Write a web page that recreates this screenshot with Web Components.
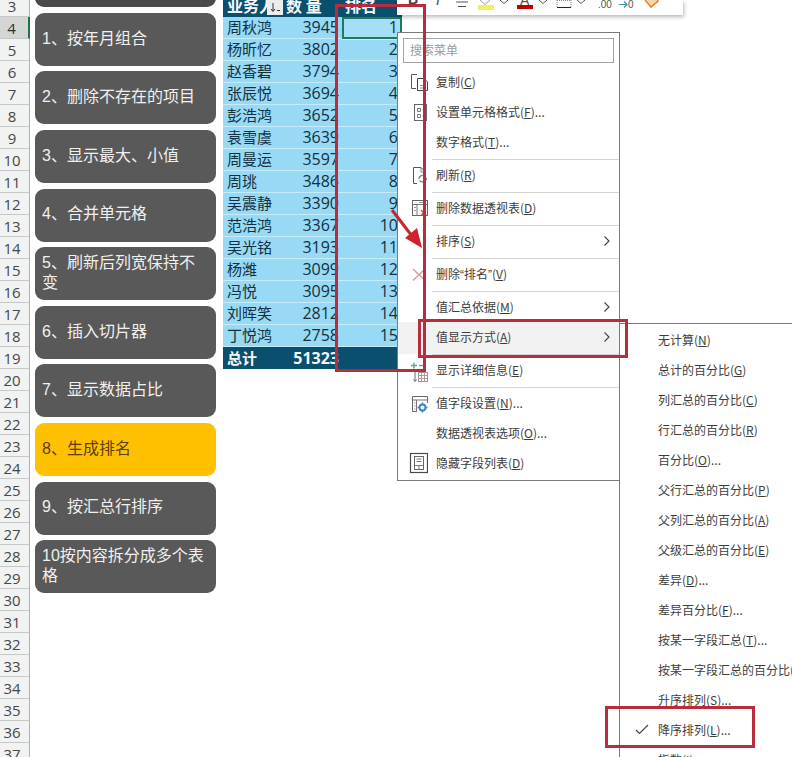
<!DOCTYPE html>
<html lang="zh">
<head>
<meta charset="utf-8">
<title>数据透视表</title>
<style>
  html, body { margin: 0; padding: 0; background: #fff; overflow: hidden; }
  body { font-family: "Noto Sans CJK SC", "Noto Sans", sans-serif; }
</style>
</head>
<body>
<x-sheet>
  <x-row-headers from="3" to="37" active="4"></x-row-headers>
  <x-slicer>
    <x-slicer-item stub></x-slicer-item>
    <x-slicer-item>1、按年月组合</x-slicer-item>
    <x-slicer-item>2、删除不存在的项目</x-slicer-item>
    <x-slicer-item>3、显示最大、小值</x-slicer-item>
    <x-slicer-item>4、合并单元格</x-slicer-item>
    <x-slicer-item>5、刷新后列宽保持不变</x-slicer-item>
    <x-slicer-item>6、插入切片器</x-slicer-item>
    <x-slicer-item>7、显示数据占比</x-slicer-item>
    <x-slicer-item selected>8、生成排名</x-slicer-item>
    <x-slicer-item>9、按汇总行排序</x-slicer-item>
    <x-slicer-item>10按内容拆分成多个表格</x-slicer-item>
  </x-slicer>
  <x-pivot></x-pivot>

  <x-toolbar></x-toolbar>

  <x-menu style="left:397px;top:32px;width:221px;">
    <x-search>搜索菜单</x-search>
    <x-menu-item>
      <svg slot="icon" viewBox="0 0 30 30" width="30" height="30" fill="none" stroke="#555"><path d="M19 7.5H13.5V21.5H18"/><path d="M19.5 11.5H26L29.5 15V23.5H19.5Z" stroke="#444"/><path d="M22 18.5H27M22 21H27" stroke="#888"/></svg>
      复制(<u>C</u>)
    </x-menu-item>
    <x-menu-item>
      <svg slot="icon" viewBox="0 0 30 30" width="30" height="30" fill="none" stroke="#666"><rect x="16.5" y="7.5" width="12" height="16"/><path d="M19.5 11.5h3v3h-3zM19.5 17.5h3v3h-3z" stroke="#777"/><path d="M24.5 13h2M24.5 19h2" stroke="#999"/></svg>
      设置单元格格式(<u>F</u>)...
    </x-menu-item>
    <x-menu-item>数字格式(<u>T</u>)...</x-menu-item>
    <x-menu-sep></x-menu-sep>
    <x-menu-item>
      <svg slot="icon" viewBox="0 0 30 30" width="30" height="30" fill="none" stroke="#555"><path d="M19 23.5H15.5V7.5H23L27.5 12V15"/><path d="M23 7.5V12H27.5" stroke="#888"/><path d="M21 19a4 4 0 0 1 7-2.5M28.5 18a4 4 0 0 1-7 2.5" stroke="#5d9b73" stroke-width="1.3"/></svg>
      刷新(<u>R</u>)
    </x-menu-item>
    <x-menu-sep></x-menu-sep>
    <x-menu-item>
      <svg slot="icon" viewBox="0 0 30 30" width="30" height="30" fill="none" stroke="#666"><rect x="14.5" y="7.5" width="15" height="15"/><path d="M14.5 11.5H29.5M19 11.5V22.5" stroke="#777"/><path d="M16 14.5h2M16 17.5h2M21 9.5h6" stroke="#999"/><path d="M23 17l5 5.5M28 17l-5 5.5" stroke="#cf4a4a" stroke-width="1.2"/></svg>
      删除数据透视表(<u>D</u>)
    </x-menu-item>
    <x-menu-sep></x-menu-sep>
    <x-menu-item sub>排序(<u>S</u>)</x-menu-item>
    <x-menu-sep></x-menu-sep>
    <x-menu-item>
      <svg slot="icon" viewBox="0 0 30 30" width="30" height="30" fill="none" stroke="#dc9a9a" stroke-width="1.4"><path d="M15 10L27 21.5M27 10L15 21.5"/></svg>
      删除<span style="font-family:'Liberation Sans',sans-serif">“</span>排名<span style="font-family:'Liberation Sans',sans-serif">”</span>(<u>V</u>)
    </x-menu-item>
    <x-menu-sep></x-menu-sep>
    <x-menu-item sub>值汇总依据(<u>M</u>)</x-menu-item>
    <x-menu-item sub hover>值显示方式(<u>A</u>)</x-menu-item>
    <x-menu-sep></x-menu-sep>
    <x-menu-item>
      <svg slot="icon" viewBox="0 0 30 30" width="30" height="30" fill="none" stroke="#666"><path d="M13 10.5H19M16 7.5V13.5" stroke="#6fa384" stroke-width="1.5"/><path d="M21 10.5H25" stroke="#888" stroke-width="1.3"/><path d="M17 17V26M15.5 24.5L17 26.5L18.5 24.5" stroke="#666"/><rect x="20.5" y="17.5" width="9" height="9" stroke="#999"/><path d="M20.5 20.5H29.5M20.5 23.5H29.5M23.5 17.5V26.5M26.5 17.5V26.5" stroke="#b09a9a"/></svg>
      显示详细信息(<u>E</u>)
    </x-menu-item>
    <x-menu-sep></x-menu-sep>
    <x-menu-item>
      <svg slot="icon" viewBox="0 0 30 30" width="30" height="30" fill="none" stroke="#666"><path d="M19 23.5H14.5V8.5H29.5V15"/><path d="M14.5 12H29.5M18.5 12V23" stroke="#777"/><path d="M16 15h1.5M16 18h1.5M16 21h1.5" stroke="#999"/><circle cx="24.5" cy="19.5" r="3" stroke="#3c86c6" stroke-width="2"/><path d="M24.5 14.5v1.5M24.5 23v1.5M19.5 19.5h1.5M28 19.5h1.5" stroke="#3c86c6" stroke-width="1.6"/></svg>
      值字段设置(<u>N</u>)...
    </x-menu-item>
    <x-menu-item>数据透视表选项(<u>O</u>)...</x-menu-item>
    <x-menu-item>
      <svg slot="icon" viewBox="0 0 30 30" width="30" height="30" fill="none" stroke="#555"><rect x="12.5" y="5.5" width="17" height="19" stroke="#4a4a4a" stroke-width="1.2"/><rect x="16.5" y="8.5" width="9" height="13" stroke="#666"/><path d="M16.5 17.5H25.5M21 17.5V21.5M18.5 11h5M18.5 13.5h5" stroke="#777"/></svg>
      隐藏字段列表(<u>D</u>)
    </x-menu-item>
  </x-menu>

  <x-menu flush style="left:619px;top:323px;width:260px;">
    <x-menu-item wide>无计算(<u>N</u>)</x-menu-item>
    <x-menu-item wide>总计的百分比(<u>G</u>)</x-menu-item>
    <x-menu-item wide>列汇总的百分比(<u>C</u>)</x-menu-item>
    <x-menu-item wide>行汇总的百分比(<u>R</u>)</x-menu-item>
    <x-menu-item wide>百分比(<u>O</u>)...</x-menu-item>
    <x-menu-item wide>父行汇总的百分比(<u>P</u>)</x-menu-item>
    <x-menu-item wide>父列汇总的百分比(<u>A</u>)</x-menu-item>
    <x-menu-item wide>父级汇总的百分比(<u>E</u>)</x-menu-item>
    <x-menu-item wide>差异(<u>D</u>)...</x-menu-item>
    <x-menu-item wide>差异百分比(<u>F</u>)...</x-menu-item>
    <x-menu-item wide>按某一字段汇总(<u>T</u>)...</x-menu-item>
    <x-menu-item wide>按某一字段汇总的百分比(<u>U</u>)...</x-menu-item>
    <x-menu-item wide>升序排列(<u>S</u>)...</x-menu-item>
    <x-menu-item wide check>降序排列(<u>L</u>)...</x-menu-item>
    <x-menu-item wide>指数(<u>I</u>)</x-menu-item>
  </x-menu>

  <x-callout style="left:335px;top:4px;width:85px;height:362px;"></x-callout>
  <x-callout style="left:418px;top:319px;width:204px;height:33px;"></x-callout>
  <x-callout style="left:605px;top:706px;width:144px;height:36px;"></x-callout>
  <x-arrow></x-arrow>
</x-sheet>

<script>
function make(tag, css, html, init) {
  customElements.define(tag, class extends HTMLElement {
    constructor() {
      super();
      this.attachShadow({ mode: 'open' }).innerHTML = '<style>' + css + '</style>' + html;
    }
    connectedCallback() { if (init) init.call(this, this.shadowRoot); }
  });
}

make('x-sheet', `
  :host { display: flex; position: relative; width: 792px; height: 757px; overflow: hidden;
          background: #fff; box-sizing: border-box; }
  .flow { display: flex; align-items: flex-start; margin-top: -5px; }
`, `<div class="flow"><slot></slot></div>`);

make('x-row-headers', `
  :host { display: block; width: 30px; flex: none; }
  .r { box-sizing: border-box; height: 22px; width: 30px; background: #f1f2f2;
       border-right: 1px solid #aeb0b0; border-bottom: 1px solid #c6c8c8;
       display: flex; align-items: center; justify-content: center; padding-right: 5px;
       font: 15px/22px "Open Sans", sans-serif; color: #474747; }
  .a { background: #d4d6d5; border-right: 2px solid #217346; color: #333; }
`, `<div id="c"></div>`, function (s) {
  const c = s.getElementById('c');
  const a = +this.getAttribute('active');
  for (let i = +this.getAttribute('from'); i <= +this.getAttribute('to'); i++) {
    const d = document.createElement('div');
    d.className = 'r' + (i === a ? ' a' : '');
    d.textContent = i;
    c.appendChild(d);
  }
});

make('x-slicer', `
  :host { display: flex; flex-direction: column; gap: 5.6px; width: 181px; margin: 0 7px 0 5px; flex: none; }
`, `<slot></slot>`);

make('x-slicer-item', `
  :host { display: flex; align-items: center; box-sizing: border-box; height: 53px; padding: 0 7px 2px;
          background: #595959; color: #f0f0f0; border-radius: 9px;
          font: 16px/19.3px "Liberation Sans", "Noto Sans CJK SC", sans-serif; }
  :host([selected]) { background: #ffc000; color: #5b3f00; }
  :host([stub]) { height: 12.2px; padding: 0; border-radius: 0 0 9px 9px; background: #4a4a4a; }
`, `<div><slot></slot></div>`);

const ROWS = [['周秋鸿',3945],['杨昕忆',3802],['赵香碧',3794],['张辰悦',3694],['彭浩鸿',3652],['袁雪虞',3639],['周曼运',3597],['周珧',3486],['吴震静',3390],['范浩鸿',3367],['吴光铭',3193],['杨潍',3099],['冯悦',3095],['刘晖笑',2812],['丁悦鸿',2758]];

make('x-pivot', `
  :host { display: block; width: 179px; flex: none; position: relative; }
  .g { display: grid; grid-template-columns: 60px 59px 60px; grid-auto-rows: 22px; }
  .c { box-sizing: border-box; height: 22px; background: #98daf5; border-bottom: 1px solid #c4ecfb;
       color: #12303f; font: 15px/19px "Noto Sans CJK SC", sans-serif; padding: 0 4px; white-space: nowrap; overflow: hidden; }
  .n { font: 16px/21px "Open Sans", sans-serif; text-align: right; padding: 0 3px 0 0; }
  .rk { padding-right: 4px; }
  .h { background: #0a4f6e; border: 0; color: #f4f8fa; font: 700 16px/20px "Noto Sans CJK SC", sans-serif; padding-left: 3px; }
  .h.first { padding-left: 4px; position: relative; overflow: visible; }
  .t { background: #0a4f6e; border: 0; color: #f4f8fa; font: 700 15px/21px "Noto Sans CJK SC", sans-serif; }
  .t.n { font: 700 16px/22px "Open Sans", sans-serif; }
  .sel { box-shadow: inset 0 0 0 2px #217a5e; height: 23px; background: #a4dff7; position: relative; }
  .btn { position: absolute; left: 44px; top: 5px; width: 16px; height: 15px; background: #ececec;
         display: flex; align-items: center; justify-content: center; }
`, `<div class="g" id="g"></div>`, function (s) {
  const g = s.getElementById('g');
  let h = `<div class="c h first">业务人<span class="btn"><svg width="12" height="11" viewBox="0 0 12 11" fill="none" stroke="#333"><path d="M4 1V9M2 7L4 9.5L6 7"/><path d="M8 8.5H11" /></svg></span></div>
           <div class="c h">数 量</div><div class="c h">排名</div>`;
  ROWS.forEach((r, i) => {
    h += `<div class="c">${r[0]}</div><div class="c n">${r[1]}</div><div class="c n rk${i === 0 ? ' sel' : ''}">${i + 1}</div>`;
  });
  h += `<div class="c t">总计</div><div class="c t n">51323</div><div class="c t"></div>`;
  g.innerHTML = h;
});

make('x-toolbar', `
  :host { display: block; position: absolute; left: 397px; top: 0; width: 286px; height: 15px;
          background: #fff; box-shadow: 1px 2px 4px rgba(0,0,0,.28); }
  svg { display: block; }
  text { font-family: "Liberation Sans", sans-serif; }
`, `<svg width="286" height="15" viewBox="397 0 286 15" fill="none">
  <text x="408" y="4" font-size="14" font-weight="700" fill="#444">B</text>
  <text x="436" y="5" font-size="14" font-style="italic" fill="#444" font-family="Liberation Serif">I</text>
  <path d="M456 2H468M458 6.500H466" stroke="#555"/>
  <path d="M480 0L485 4.500L490 0" stroke="#999"/>
  <rect x="478" y="5" width="16" height="5" fill="#f4f15a"/>
  <path d="M500 0L504 3.500L508 0M539 0L543 3.500L547 0M577 0L581 3.500L585 0" stroke="#555"/>
  <text x="520" y="5" font-size="14" fill="#555">A</text>
  <rect x="517" y="5" width="16" height="4" fill="#c00000"/>
  <path d="M557 0.500H571M557 0V7M571 0V7" stroke="#888" stroke-dasharray="1 1"/>
  <path d="M557 7.500H571" stroke="#222"/>
  <text x="598" y="8" font-size="10" fill="#555">.00</text>
  <path d="M619 4.500H627M624 1.500L627 4.500L624 7.500" stroke="#3d8fb0" stroke-width="1.2"/>
  <text x="628" y="8" font-size="10" fill="#555">0</text>
  <path d="M645 0L651 7L658 1L656 -2" fill="#f6d6a6" stroke="#dc8c35" stroke-width="1.6"/>
</svg>`);

make('x-menu', `
  :host { display: block; position: absolute; box-sizing: content-box; background: #fff;
          border: 1px solid #7b7b7b; padding: 5px 0 2px; color: #3d3d3d;
          font: 12px/30px "Noto Sans CJK SC", "Noto Sans", sans-serif; }
  :host([flush]) { padding: 1px 0 0; }
`, `<slot></slot>`);

make('x-search', `
  :host { display: block; box-sizing: border-box; height: 25px; margin: 0 5px 4px; padding-left: 6px;
          border: 1px solid #a3a3a3; color: #9a9a9a; font-size: 12px; line-height: 21px; }
`, `<slot></slot>`);

make('x-menu-item', `
  :host { display: flex; align-items: center; height: 30px; position: relative; white-space: nowrap; }
  :host([hover]) { background: #f2f2f2; box-shadow: 0 2px 0 #f2f2f2; }
  .i { width: 30px; height: 30px; flex: none; }
  .t { margin-left: 8px; flex: 1; }
  .s { display: none; margin-right: 9px; }
  :host([sub]) .s { display: block; }
  .c { display: none; position: absolute; left: 15px; top: 9px; }
  :host([check]) .c { display: block; }
  ::slotted(svg) { display: block; }
`, `<div class="i"><slot name="icon"></slot></div>
    <div class="t"><slot></slot></div>
    <svg class="s" width="6" height="10" viewBox="0 0 6 10" fill="none" stroke="#444" stroke-width="1.1"><path d="M.5 .5L5 5L.5 9.500"/></svg>
    <svg class="c" width="14" height="11" viewBox="0 0 14 11" fill="none" stroke="#444" stroke-width="1.2"><path d="M1 6L4.500 9.500L13 1"/></svg>`);

make('x-menu-sep', `
  :host { display: block; height: 1px; margin: 2px 0 0 34px; background: #d4d4d4; }
`, ``);

make('x-callout', `
  :host { display: block; position: absolute; border: 3px solid #b92c3e; pointer-events: none; }
`, ``);

make('x-arrow', `
  :host { display: block; position: absolute; left: 385px; top: 205px; width: 45px; height: 50px; }
  svg { display: block; }
`, `<svg width="45" height="50" viewBox="385 205 45 50"><path d="M392 210L412 236" stroke="#c9252f" stroke-width="3" fill="none"/><path d="M422 248L405 238L417 228Z" fill="#d0222c"/></svg>`);
</script>
</body>
</html>
